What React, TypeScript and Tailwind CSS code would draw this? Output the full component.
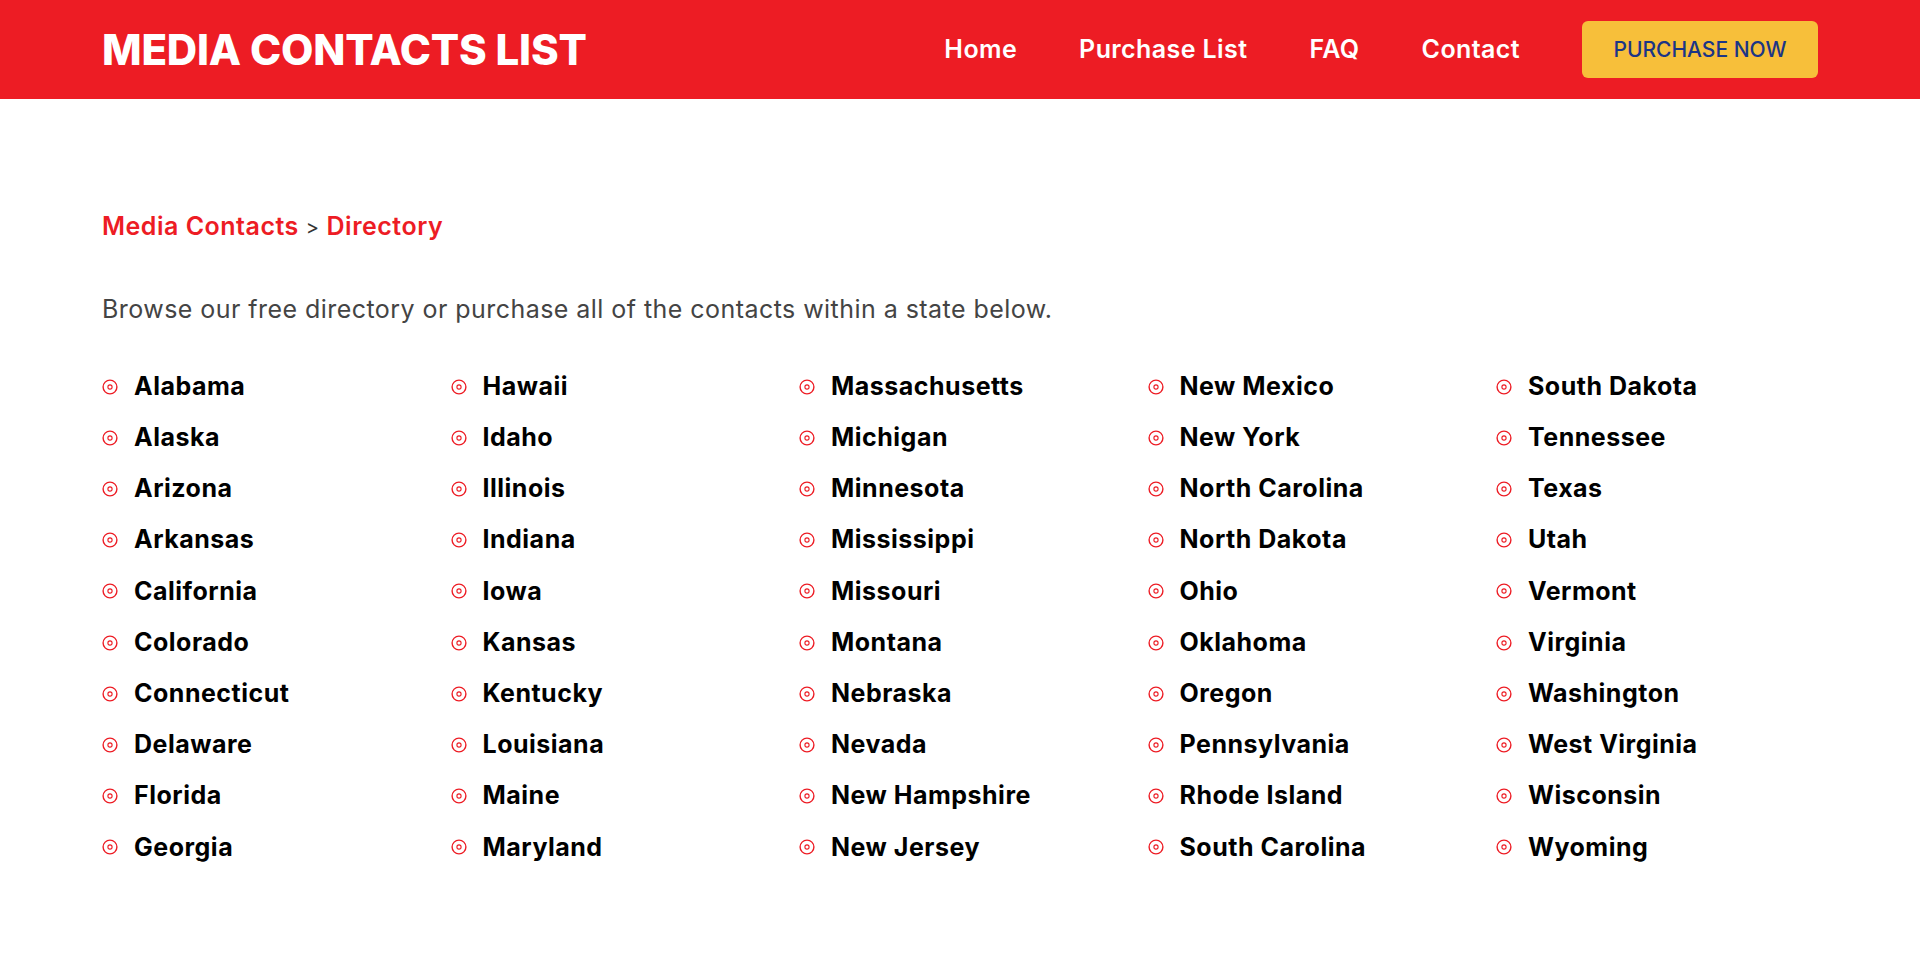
import React from "react";

const columns: string[][] = [
  ["Alabama", "Alaska", "Arizona", "Arkansas", "California", "Colorado", "Connecticut", "Delaware", "Florida", "Georgia"],
  ["Hawaii", "Idaho", "Illinois", "Indiana", "Iowa", "Kansas", "Kentucky", "Louisiana", "Maine", "Maryland"],
  ["Massachusetts", "Michigan", "Minnesota", "Mississippi", "Missouri", "Montana", "Nebraska", "Nevada", "New Hampshire", "New Jersey"],
  ["New Mexico", "New York", "North Carolina", "North Dakota", "Ohio", "Oklahoma", "Oregon", "Pennsylvania", "Rhode Island", "South Carolina"],
  ["South Dakota", "Tennessee", "Texas", "Utah", "Vermont", "Virginia", "Washington", "West Virginia", "Wisconsin", "Wyoming"],
];

function DotIcon() {
  return (
    <svg width="16" height="16" viewBox="0 0 16 16" fill="none" className="shrink-0">
      <circle cx="8" cy="8" r="6.9" stroke="#ED1C24" strokeWidth="1.4" />
      <circle cx="8" cy="8" r="2.1" stroke="#ED1C24" strokeWidth="1.1" />
    </svg>
  );
}

export default function App() {
  return (
    <div className="min-h-screen bg-white font-['Inter',sans-serif]">
      <header className="h-[99px] bg-[#ED1C24] flex items-center justify-between px-[102px]">
        <div className="text-white font-extrabold text-[42px] tracking-[-0.2px] leading-none">MEDIA CONTACTS LIST</div>
        <nav className="flex items-center gap-[62px]">
          <a className="text-white font-semibold text-[25px] tracking-[0.4px]">Home</a>
          <a className="text-white font-semibold text-[25px] tracking-[0.4px]">Purchase List</a>
          <a className="text-white font-semibold text-[25px] tracking-[0.4px]">FAQ</a>
          <a className="text-white font-semibold text-[25px] tracking-[0.4px]">Contact</a>
          <a className="w-[236px] h-[57px] rounded-[6px] bg-[#F7BF3A] flex items-center justify-center text-[#1C3586] font-medium text-[21px]">PURCHASE NOW</a>
        </nav>
      </header>
      <main className="px-[102px] pt-[115px]">
        <div className="flex items-center text-[25px] font-semibold tracking-[0.5px] leading-none">
          <span className="text-[#ED1C24]">Media Contacts</span>
          <span className="text-[#333] mx-[7px] font-normal text-[20px]">&gt;</span>
          <span className="text-[#ED1C24]">Directory</span>
        </div>
        <p className="mt-[58px] text-[25px] tracking-[0.45px] text-[#444] leading-none">Browse our free directory or purchase all of the contacts within a state below.</p>
        <div className="mt-[39px] grid grid-cols-[repeat(5,348.5px)]">
          {columns.map((col, i) => (
            <ul key={i} className="flex flex-col">
              {col.map((s) => (
                <li key={s} className="h-[51.2px] flex items-center gap-[16px]">
                  <DotIcon />
                  <span className="text-[25px] font-bold tracking-[0.5px] text-black">{s}</span>
                </li>
              ))}
            </ul>
          ))}
        </div>
      </main>
    </div>
  );
}
